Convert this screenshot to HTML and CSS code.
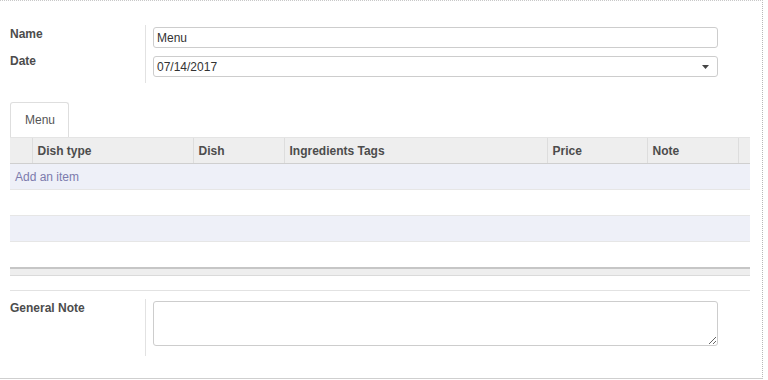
FILE: index.html
```html
<!DOCTYPE html>
<html lang="en">
<head>
  <meta charset="UTF-8">
  <title>Menu</title>
  <link rel="stylesheet" href="styles.css">
</head>
<body>

  <div class="sheet">
    <div class="group">
      <div class="label">Name</div>
      <div class="field first">
        <input class="input" type="text" value="Menu">
      </div>
      <div class="label">Date</div>
      <div class="field last">
        <div class="input select">
          <span>07/14/2017</span>
          <svg class="caret" width="7" height="4" viewBox="0 0 7 4"><path d="M0 0h7L3.5 4z" fill="#444"/></svg>
        </div>
      </div>
    </div>

    <div class="tabs">
      <span class="tab">Menu</span>
    </div>

    <table class="list">
      <thead>
        <tr>
          <th class="handle"></th>
          <th class="c-type">Dish type</th>
          <th class="c-dish">Dish</th>
          <th class="c-tags">Ingredients Tags</th>
          <th class="c-price">Price</th>
          <th class="c-note">Note</th>
          <th class="c-end"></th>
        </tr>
      </thead>
      <tbody>
        <tr class="odd"><td colspan="7"><a class="add" href="#">Add an item</a></td></tr>
        <tr><td colspan="7"></td></tr>
        <tr class="odd"><td colspan="7"></td></tr>
        <tr><td colspan="7"></td></tr>
      </tbody>
      <tfoot>
        <tr><td colspan="7"></td></tr>
      </tfoot>
    </table>

    <div class="separator"></div>

    <div class="group note">
      <div class="label">General Note</div>
      <div class="field single">
        <textarea class="input area"></textarea>
      </div>
    </div>
  </div>

</body>
</html>
```

FILE: styles.css
```css
* {
  box-sizing: border-box;
  margin: 0;
  padding: 0;
}

body {
  background-color: #fff;
  font-family: "Liberation Sans", Arial, sans-serif;
  font-size: 12px;
  color: #4c4c4c;
}

.sheet {
  width: 763px;
  height: 379px;
  padding: 24px 12px 0 10px;
  border-top: 1px dotted #c8c8c8;
  border-right: 1px dotted #b8b8b8;
  border-bottom: 1px solid #cfcfcf;
  background-color: #fff;
}

/* label / field groups */
.group {
  display: grid;
  grid-template-columns: 135px 1fr;
}

.label {
  font-weight: bold;
  line-height: 18px;
  color: #4c4c4c;
}

.field {
  border-left: 1px solid #e2e2e2;
  padding: 2px 32px 4px 7px;
}

.field.last {
  padding: 4px 32px 6px 7px;
}

.field.single {
  padding: 2px 32px 10px 7px;
}

.input {
  display: block;
  width: 100%;
  height: 21px;
  border: 1px solid #cdcdcd;
  border-radius: 3px;
  padding: 0 3px;
  font-family: inherit;
  font-size: 12px;
  color: #333;
  background-color: #fff;
  outline: none;
}

.select {
  display: flex;
  align-items: center;
  justify-content: space-between;
  padding-right: 8px;
}

.caret {
  display: block;
}

.area {
  height: 45px;
  resize: vertical;
}

/* notebook tabs */
.tabs {
  margin-top: 19px;
  display: flex;
}

.tab {
  border: 1px solid #dedede;
  border-bottom: none;
  border-radius: 3px 3px 0 0;
  padding: 8px 13px 8px 14px;
  line-height: 18px;
  color: #555;
  background-color: #fff;
}

/* one2many list */
.list {
  width: 100%;
  border-collapse: collapse;
  table-layout: fixed;
}

.list th {
  height: 26px;
  padding: 0 5px;
  text-align: left;
  font-weight: bold;
  color: #4c4c4c;
  background-color: #eeeeee;
  border-top: 1px solid #e4e4e4;
  border-left: 1px solid #dddddd;
  border-bottom: 1px solid #cfcfcf;
}

.list th.handle {
  width: 22px;
  border-left: none;
}

.c-type { width: 161px; }
.c-dish { width: 91px; }
.c-tags { width: 263px; }
.c-price { width: 100px; }
.c-note { width: 91px; }
.c-end { width: 12px; }

.list td {
  height: 26px;
  padding: 0 5px;
  border-bottom: 1px solid #e6e6e6;
}

.list tr.odd td {
  background-color: #eef0f8;
}

.add {
  color: #7c7bad;
  text-decoration: none;
}

.list tfoot td {
  height: 8px;
  padding: 0;
  background-color: #eeeeee;
  border-top: 2px solid #c6c6c6;
  border-bottom: 1px solid #dadada;
}

.separator {
  margin-top: 14px;
  border-top: 1px solid #e2e2e2;
}

.note {
  margin-top: 8px;
}
```
